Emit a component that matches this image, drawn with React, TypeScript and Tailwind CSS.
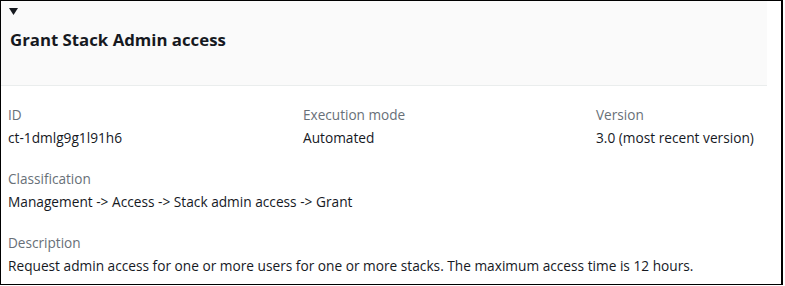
import type { ReactNode } from "react";

type Field = { label: string; value: ReactNode };

const topRow: Field[] = [
  { label: "ID", value: "ct-1dmlg9g1l91h6" },
  { label: "Execution mode", value: "Automated" },
  { label: "Version", value: "3.0 (most recent version)" },
];

function KeyValue({ label, value }: Field) {
  return (
    <div className="flex flex-col">
      <span className="text-[13.6px] leading-[22px] text-[#687078]">{label}</span>
      <span className="text-[13.7px] leading-[23px] text-[#16191f]">{value}</span>
    </div>
  );
}

export default function App() {
  return (
    <div
      className="h-[286px] w-[785px] bg-white"
      style={{ fontFamily: '"Open Sans", "Noto Sans", sans-serif' }}
    >
      <div className="flex h-[285px] w-[783px] flex-col border border-r-2 border-black">
        <div className="h-[85px] w-[766px] border-b border-[#eaeded] bg-[#fafafa]">
          <div className="px-2 pt-[7px]">
            <svg width="9" height="7" viewBox="0 0 9 7" className="block">
              <polygon points="0,0 9,0 4.5,7" fill="#16191f" />
            </svg>
          </div>
          <h2 className="mt-[13px] px-[9px] text-[16.8px] font-bold leading-[24px] text-[#16191f]">
            Grant Stack Admin access
          </h2>
        </div>

        <div className="flex flex-col gap-[19px] px-[7px] pt-[18px]">
          <div className="grid grid-cols-[295px_293px_1fr]">
            {topRow.map((f) => (
              <KeyValue key={f.label} {...f} />
            ))}
          </div>
          <KeyValue label="Classification" value="Management -> Access -> Stack admin access -> Grant" />
          <KeyValue
            label="Description"
            value="Request admin access for one or more users for one or more stacks. The maximum access time is 12 hours."
          />
        </div>
      </div>
    </div>
  );
}
